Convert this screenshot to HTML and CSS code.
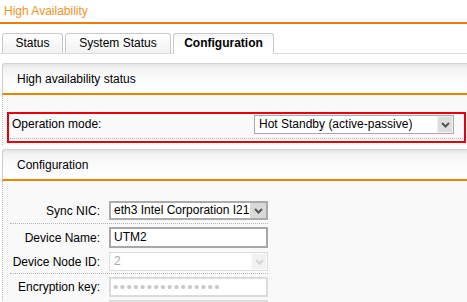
FILE: index.html
```html
<!DOCTYPE html>
<html>
<head>
<meta charset="utf-8">
<link rel="stylesheet" href="styles.css">
</head>
<body>
<div class="title">High Availability</div>
<div class="tabs">
  <div class="tab tab-status">Status</div>
  <div class="tab tab-system">System Status</div>
  <div class="tab tab-config active">Configuration</div>
</div>

<div class="panel panel-first">
  <div class="panel-head">High availability status</div>
  <div class="panel-body body-status">
    <div class="highlight">
      <div class="op-row">
        <span class="op-label">Operation mode:</span>
        <div class="select op-select">
          <span class="select-text">Hot Standby (active-passive)</span>
          <span class="select-btn"><svg width="9" height="6" viewBox="0 0 9 6"><path d="M1 1 L4.5 4.5 L8 1" fill="none" stroke="#555" stroke-width="2"/></svg></span>
        </div>
      </div>
    </div>
  </div>
</div>

<div class="panel panel-second">
  <div class="panel-head">Configuration</div>
  <div class="panel-body body-config">
    <div class="group g1">
      <div class="row">
        <span class="label">Sync NIC:</span>
        <div class="select field">
          <span class="select-text">eth3 Intel Corporation I21</span>
          <span class="select-btn"><svg width="9" height="6" viewBox="0 0 9 6"><path d="M1 1 L4.5 4.5 L8 1" fill="none" stroke="#555" stroke-width="2"/></svg></span>
        </div>
      </div>
    </div>
    <div class="group g2">
      <div class="row">
        <span class="label">Device Name:</span>
        <div class="input field name-input">UTM2</div>
      </div>
      <div class="row">
        <span class="label">Device Node ID:</span>
        <div class="select field disabled">
          <span class="select-text">2</span>
          <span class="select-btn"><svg width="9" height="6" viewBox="0 0 9 6"><path d="M1 1 L4.5 4.5 L8 1" fill="none" stroke="#d4d4d4" stroke-width="2"/></svg></span>
        </div>
      </div>
    </div>
    <div class="group g3">
      <div class="row">
        <span class="label">Encryption key:</span>
        <div class="input field key-input"><span class="dots">••••••••••••••••</span></div>
      </div>
      <div class="row">
        <span class="label"></span>
        <div class="input field key-input"></div>
      </div>
    </div>
  </div>
</div>
</body>
</html>
```

FILE: styles.css
```css
html, body {
  margin: 0;
  padding: 0;
  background: #fff;
  overflow: hidden;
}
body {
  font-family: "Liberation Sans", Arial, sans-serif;
  font-size: 12px;
  color: #000;
  width: 467px;
  height: 302px;
}
.title {
  box-sizing: border-box;
  height: 24px;
  padding: 4px 0 0 4px;
  line-height: 14px;
  color: #f39420;
  border-bottom: 2px solid #ec7d00;
}
.tabs {
  display: flex;
  align-items: flex-end;
  margin-top: 9px;
  padding-left: 2px;
  height: 20px;
  border-bottom: 1px solid #dcdcdc;
}
.tab {
  box-sizing: border-box;
  height: 20px;
  line-height: 19px;
  text-align: center;
  border: 1px solid #c9c9c9;
  border-bottom: none;
  border-radius: 3px 3px 0 0;
  background: linear-gradient(#ffffff, #f1f1f1);
  margin-right: 2px;
}
.tab-status { width: 61px; }
.tab-system { width: 106px; }
.tab-config { width: 101px; }
.tab.active {
  height: 21px;
  margin-bottom: -1px;
  font-weight: bold;
  background: linear-gradient(#f6f6f6, #ffffff 60%);
}
.panel {
  margin-left: 2px;
}
.panel-first { margin-top: 9px; }
.panel-second { margin-top: 4px; }
.panel-head {
  box-sizing: border-box;
  height: 32px;
  padding: 0 0 0 14px;
  line-height: 30px;
  border-top: 1px solid #d2d2d2;
  border-left: 1px solid #cfcfcf;
  border-bottom: 2px solid #ef8100;
  border-radius: 3px 0 0 0;
  background: linear-gradient(#e4e4e4, #f3f3f3 15%, #fbfbfb 50%, #ffffff);
}
.panel-body {
  background: #f9f9f9;
  border-left: 1px dotted #b9b9b9;
}
.body-status {
  padding: 17px 1px 2px 4px;
}
.highlight {
  box-sizing: border-box;
  height: 31px;
  border: 2px solid #e8000c;
  padding: 0 1px 0 1px;
}
.op-row {
  display: flex;
  align-items: flex-start;
  justify-content: space-between;
  height: 24px;
  padding: 0 9px 0 2px;
  border-bottom: 1px dotted #b5b5b5;
}
.op-label {
  line-height: 14px;
  margin-top: 3px;
}
.select {
  box-sizing: border-box;
  display: flex;
  align-items: stretch;
  height: 19px;
  background: #fff;
  border: 1px solid #a9a9a9;
}
.op-select {
  width: 200px;
  margin-top: 1px;
}
.select-text {
  flex: 1;
  overflow: hidden;
  white-space: nowrap;
  padding-left: 4px;
  line-height: 17px;
  color: #000;
}
.select-btn {
  box-sizing: border-box;
  width: 16px;
  display: flex;
  align-items: center;
  justify-content: center;
  background: #dedede;
  border: 1px solid #f2f2f2;
}
.body-config {
  padding: 20px 0 0 7px;
  height: 102px;
  overflow: hidden;
}
.group {
  width: 258px;
  border-bottom: 1px dotted #b5b5b5;
}
.g1 { padding-bottom: 3px; }
.g2 { padding-top: 3px; padding-bottom: 2px; }
.g3 { padding-top: 3px; border-bottom: none; }
.row {
  display: flex;
  align-items: center;
}
.g2 .row + .row { margin-top: 4px; }
.g3 .row + .row { margin-top: 3px; }
.label {
  width: 90px;
  margin-right: 9px;
  text-align: right;
  line-height: 14px;
}
.field {
  width: 159px;
}
.g1 .select {
  border: 2px solid #ababab;
}
.g1 .select-text { line-height: 15px; padding-left: 3px; }
.g1 .select-btn { width: 17px; border: none; border-left: 1px solid #fff; background: #d9d9d9; }
.input {
  box-sizing: border-box;
  background: #fff;
  padding-left: 4px;
}
.name-input {
  height: 21px;
  border: 2px solid #a7a7a7;
  line-height: 17px;
  padding-left: 3px;
}
.disabled {
  border: 1px solid #dddddd;
}
.disabled .select-text { color: #a8a8a8; }
.disabled .select-btn { background: #f1f1f1; border: 1px solid #fafafa; }
.key-input {
  height: 20px;
  border: 2px solid #dcdcdc;
  line-height: 16px;
  padding-left: 2px;
}
.dots {
  color: #c9c9c9;
  font-size: 15px;
  letter-spacing: 1.5px;
}
```
